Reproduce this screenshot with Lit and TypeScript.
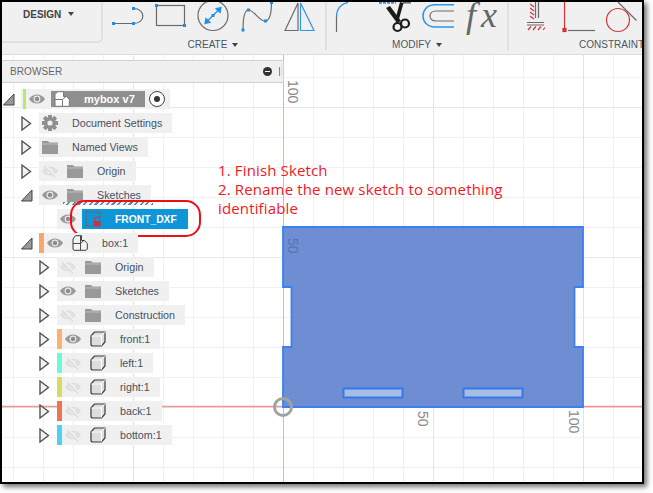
import { LitElement, html, svg, css, nothing } from 'lit';
import { customElement } from 'lit/decorators.js';

type Row = {
  depth: number;
  arrow?: 'right' | 'down';
  label: string;
  icon: 'gear' | 'folder' | 'body' | 'cube' | 'sketch' | 'doc';
  eye?: 'on' | 'off';
  bar?: string;
  kind?: 'root' | 'active';
};

const rows: Row[] = [
  { depth: 0, arrow: 'down', label: 'mybox v7', icon: 'doc', eye: 'on', bar: '#b8e96e', kind: 'root' },
  { depth: 1, arrow: 'right', label: 'Document Settings', icon: 'gear' },
  { depth: 1, arrow: 'right', label: 'Named Views', icon: 'folder' },
  { depth: 1, arrow: 'right', label: 'Origin', icon: 'folder', eye: 'off' },
  { depth: 1, arrow: 'down', label: 'Sketches', icon: 'folder', eye: 'on' },
  { depth: 2, label: 'FRONT_DXF', icon: 'sketch', eye: 'on', kind: 'active' },
  { depth: 1, arrow: 'down', label: 'box:1', icon: 'body', eye: 'on', bar: '#f9a56b' },
  { depth: 2, arrow: 'right', label: 'Origin', icon: 'folder', eye: 'off' },
  { depth: 2, arrow: 'right', label: 'Sketches', icon: 'folder', eye: 'on' },
  { depth: 2, arrow: 'right', label: 'Construction', icon: 'folder', eye: 'off' },
  { depth: 2, arrow: 'right', label: 'front:1', icon: 'cube', eye: 'on', bar: '#fdb36f' },
  { depth: 2, arrow: 'right', label: 'left:1', icon: 'cube', eye: 'off', bar: '#6cfad6' },
  { depth: 2, arrow: 'right', label: 'right:1', icon: 'cube', eye: 'off', bar: '#d8dc58' },
  { depth: 2, arrow: 'right', label: 'back:1', icon: 'cube', eye: 'off', bar: '#ec7550' },
  { depth: 2, arrow: 'right', label: 'bottom:1', icon: 'cube', eye: 'off', bar: '#4ed0f2' },
];

const BLUE = '#1e8fe6';
const GRAY = '#6a6a6a';
const RED = '#d2343a';

const dot = (x: number, y: number) => svg`<rect x=${x - 1.5} y=${y - 1.5} width="3" height="3" fill=${BLUE} stroke="none"></rect>`;

const arrowIcon = (dir?: string) => {
  if (!dir) return nothing;
  return dir === 'right'
    ? html`<svg class="arrow" width="11" height="15" viewBox="0 0 11 15"><path d="M1 1 L9.5 7.5 L1 14 Z" fill="#f2f2f2" stroke="#555" stroke-width="1.4"></path></svg>`
    : html`<svg class="arrow" width="12" height="15" viewBox="0 0 12 15"><path d="M0.5 13 L11 13 L11 2 Z" fill="#999" stroke="#444" stroke-width="1"></path></svg>`;
};

const eyeIcon = (state?: string) => {
  if (!state) return nothing;
  if (state === 'on') {
    return html`<svg class="eye" width="16" height="12" viewBox="0 0 16 12">
      <path d="M0 6 C3.5 0 12.5 0 16 6 C12.5 12 3.5 12 0 6 Z" fill="#999"></path>
      <circle cx="8" cy="6" r="3.4" fill="#e8e8e8"></circle>
      <circle cx="8" cy="6" r="2.2" fill="#8c8c8c"></circle>
    </svg>`;
  }
  return html`<svg class="eye" width="16" height="14" viewBox="0 0 16 14">
    <path d="M0 7 C3.5 1 12.5 1 16 7 C12.5 13 3.5 13 0 7 Z" fill="#e0e0e0"></path>
    <circle cx="8" cy="7" r="2.6" fill="#f0f0f0"></circle>
    <path d="M2.5 1 L14 13" stroke="#f0f0f0" stroke-width="2.4"></path>
    <path d="M2 2 L13 13.5" stroke="#dcdcdc" stroke-width="1.2"></path>
  </svg>`;
};

const gearTeeth = [0, 45, 90, 135, 180, 225, 270, 315];

const treeIcon = (name: string) => {
  switch (name) {
    case 'gear':
      return html`<svg class="icon" width="16" height="16" viewBox="0 0 16 16">
        ${gearTeeth.map((a) => svg`<rect x="6.2" y="0" width="3.6" height="16" fill="#8e8e8e" transform="rotate(${a} 8 8)"></rect>`)}
        <circle cx="8" cy="8" r="6" fill="#8e8e8e"></circle>
        <circle cx="8" cy="8" r="2.6" fill="#f0f0f0"></circle>
      </svg>`;
    case 'folder':
      return html`<svg class="icon" width="16" height="13" viewBox="0 0 16 13">
        <path d="M0 0 H6 L7.5 1.5 H16 V13 H0 Z" fill="#999"></path>
        <path d="M0 3 H16" stroke="#c9c9c9" stroke-width="0.8"></path>
      </svg>`;
    case 'body':
      return html`<svg class="icon" width="16" height="16" viewBox="0 0 16 16" fill="#f4f4f4" stroke="#3c3c3c" stroke-width="1">
        <path d="M1 4 L3.5 0.7 H9.5 V5.5 H12.5 L15.3 8.5 V14 L14 15.3 H2 L1 14 Z"></path>
        <path d="M1 8.5 H8.5 V15 M8.5 8.5 L12 5.5 M8.5 1 V8.5" fill="none" stroke-width="0.9"></path>
      </svg>`;
    case 'doc':
      return html`<svg class="icon" width="16" height="16" viewBox="0 0 16 16" fill="#fff" stroke="#777" stroke-width="1">
        <path d="M1 3.5 L3.5 0.7 H9.5 V5.5 H12.5 L15.3 8.5 V15.3 H1 Z"></path>
        <path d="M1 8.5 H8.5 V15 M8.5 8.5 L12 5.5" fill="none"></path>
      </svg>`;
    case 'cube':
      return html`<svg class="icon" width="16" height="16" viewBox="0 0 16 16">
        <path d="M1 5 L4.5 1 H15 V11 L11.5 15 H2 L1 14 Z" fill="#dcdde2" stroke="#3c3c3c" stroke-width="1.2"></path>
        <path d="M1.5 5 H11.5 V14.5 M11.5 5 L15 1.2" fill="none" stroke="#fff" stroke-width="1"></path>
      </svg>`;
    default:
      return html`<svg class="icon" width="16" height="16" viewBox="0 0 16 16">
        <path d="M1 1 H15 V8 M1 1 V15 H7" fill="none" stroke="#9c4a3a" stroke-width="1" stroke-dasharray="2 1"></path>
        <path d="M9.5 10 V8.5 A2.5 2.5 0 0 1 14.5 8.5 V10" fill="none" stroke="#d0303a" stroke-width="1"></path>
        <rect x="8.5" y="10" width="7" height="5.5" fill="#d0303a"></rect>
      </svg>`;
  }
};

@customElement('app-root')
export class AppRoot extends LitElement {
  static styles = css`
    :host {
      display: block;
      width: 653px;
      height: 493px;
      background: #fff;
      overflow: hidden;
      font-family: 'Liberation Sans', Arial, sans-serif;
    }

    .window {
      box-sizing: border-box;
      width: 644px;
      height: 484px;
      border: 2px solid #000;
      display: flex;
      flex-direction: column;
      box-shadow: 3px 3px 5px rgba(0, 0, 0, 0.55);
    }

    /* toolbar */
    .toolbar {
      box-sizing: border-box;
      display: flex;
      align-items: flex-start;
      height: 53px;
      flex: none;
      background: #f0f0f0;
      border-bottom: 1px solid #dcdcdc;
      overflow: hidden;
    }

    .design {
      box-sizing: border-box;
      width: 101px;
      height: 41px;
      flex: none;
      display: flex;
      align-items: flex-start;
      gap: 5px;
      padding: 7px 0 0 21px;
      border-right: 2px solid #e0e0e0;
      border-bottom: 2px solid #e0e0e0;
      border-bottom-right-radius: 5px;
      font-size: 10px;
      font-weight: bold;
      color: #444;
    }

    .caret {
      display: inline-block;
      width: 0;
      height: 0;
      margin-left: 5px;
      vertical-align: 1px;
      border-left: 3px solid transparent;
      border-right: 3px solid transparent;
      border-top: 4px solid #444;
    }

    .design .caret {
      margin: 3px 0 0 2px;
    }

    .group {
      flex: none;
      box-sizing: border-box;
      height: 48px;
      border-right: 2px solid #e0e0e0;
      display: flex;
      flex-direction: column;
    }

    .group svg {
      display: block;
      flex: none;
    }

    .group.create {
      width: 224px;
    }

    .group.modify {
      width: 182px;
    }

    .group.constraint {
      width: 132px;
      border-right: none;
    }

    .label {
      font-size: 10px;
      line-height: 12px;
      padding-top: 1px;
      color: #4b5563;
      text-align: center;
      white-space: nowrap;
    }

    .create .label {
      padding-right: 2px;
    }

    .constraint .label {
      text-align: left;
      padding-left: 70px;
    }

    /* canvas */
    .canvas {
      position: relative;
      flex: 1;
      overflow: hidden;
      background-color: #fff;
      background-image:
        linear-gradient(to right, #e4e4e4 1px, transparent 1px),
        linear-gradient(to bottom, #e8e8e8 1px, transparent 1px),
        linear-gradient(to right, #f1f1f1 1px, transparent 1px),
        linear-gradient(to bottom, #f1f1f1 1px, transparent 1px);
      background-size: 150px 150px, 150px 150px, 30px 30px, 30px 30px;
      background-position: 131px 0, 0 52px, 11px 0, 0 22px;
    }

    .sketch {
      position: absolute;
      left: 0;
      top: 0;
    }

    .shape {
      filter: blur(0.35px);
    }

    .axis-text {
      font-family: 'Liberation Sans', Arial, sans-serif;
      font-size: 14px;
      fill: #8a8a8a;
    }

    .axis-text.inside {
      fill: #5a72b0;
    }

    .note {
      position: absolute;
      left: 216px;
      top: 106px;
      width: 310px;
      font-family: 'Open Sans', 'Liberation Sans', sans-serif;
      font-size: 15px;
      letter-spacing: 0.14px;
      line-height: 19px;
      color: #f2181e;
    }

    /* browser panel */
    .browser {
      position: absolute;
      left: 0;
      top: 5px;
      width: 282px;
    }

    .browser-head {
      box-sizing: border-box;
      height: 23px;
      display: flex;
      align-items: center;
      justify-content: space-between;
      padding: 0 0 0 8px;
      background: #f0f0f0;
      border: 1px solid #cfcfcf;
      border-left: none;
      font-size: 10px;
      color: #666;
      letter-spacing: 0.1px;
    }

    .head-tools {
      display: flex;
      align-items: center;
      gap: 7px;
      padding-right: 1px;
    }

    .collapse {
      width: 9px;
      height: 9px;
      border-radius: 50%;
      background: #333;
      display: flex;
      align-items: center;
      justify-content: center;
    }

    .collapse::after {
      content: '';
      width: 5px;
      height: 1px;
      background: #fff;
    }

    .grip {
      width: 1px;
      height: 9px;
      border-left: 1px solid #888;
      border-right: 1px solid #ddd;
    }

    .tree {
      padding-top: 4px;
    }

    .row {
      position: relative;
      display: flex;
      align-items: center;
      height: 24px;
    }

    .arrow {
      flex: none;
    }

    .arrow-slot {
      width: 18px;
      flex: none;
      display: flex;
      align-items: center;
    }

    .chip {
      display: flex;
      align-items: center;
      height: 20px;
      padding: 0 10px 0 3px;
      background: #f0f0f0;
      font-size: 10.7px;
      color: #47505c;
      white-space: nowrap;
    }

    .chip.barred {
      padding-left: 0;
    }

    .bar {
      width: 5px;
      height: 20px;
      margin-right: 3px;
      flex: none;
    }

    .eye {
      width: 16px;
      flex: none;
      margin-right: 9px;
    }

    .icon {
      flex: none;
    }

    .text {
      margin-left: 14px;
    }

    .root-chip {
      padding: 0 5px 0 2px;
    }

    .root-chip .bar {
      width: 3px;
    }

    .root-chip .eye {
      margin-right: 6px;
    }

    .root-name {
      display: flex;
      align-items: center;
      width: 94px;
      height: 16px;
      background: #8f8f8f;
      color: #fff;
      font-weight: bold;
      font-size: 11px;
      box-sizing: border-box;
      margin-right: 4px;
    }

    .root-name .icon {
      margin-left: 3px;
    }

    .root-name span {
      margin-left: 14px;
    }

    .radio {
      width: 16px;
      height: 16px;
      box-sizing: border-box;
      border: 1px solid #444;
      border-radius: 50%;
      background: #fff;
      display: flex;
      align-items: center;
      justify-content: center;
    }

    .radio::after {
      content: '';
      width: 6px;
      height: 6px;
      border-radius: 50%;
      background: #333;
    }

    .active-chip {
      padding-right: 0;
    }

    .active-chip .eye {
      margin-right: 6px;
    }

    .active-name {
      display: flex;
      align-items: center;
      width: 106px;
      height: 20px;
      background: #0f96d8;
      color: #fff;
      font-weight: bold;
      font-size: 10.3px;
      padding-left: 3px;
      box-sizing: border-box;
    }

    .active-name span {
      margin-left: 14px;
    }

    .squiggle {
      position: absolute;
      left: 61px;
      top: -5px;
      width: 90px;
      height: 3px;
      background-image: repeating-linear-gradient(135deg, #6c80a6 0 1.5px, transparent 1.5px 4px);
    }

    .highlight {
      position: absolute;
      left: 68px;
      top: -7px;
      width: 131px;
      height: 37px;
      box-sizing: border-box;
      border: 2px solid #ee0f16;
      border-radius: 15px;
    }
  `;

  private renderCreateIcons() {
    return html`<svg width="222" height="36" viewBox="103 2 222 36" fill="none" stroke=${GRAY} stroke-width="1.2">
      <path d="M113.5 23.5 H133.5 M133.5 8.5 C146 8.5 146 23.5 133.5 23.5"></path>
      ${dot(113.5, 23.5)} ${dot(133.5, 23.5)} ${dot(133.5, 8.5)}
      <rect x="156.5" y="5.5" width="28" height="20"></rect>
      ${dot(156.5, 5.5)} ${dot(184.5, 25.5)}
      <circle cx="213" cy="15.5" r="15"></circle>
      <path d="M205 23.5 L221 7.5 M205 23.5 l5 -1 l-4 -4 Z M221 7.5 l-5 1 l4 4 Z" stroke=${BLUE} fill=${BLUE}></path>
      ${dot(213, 15.5)}
      <path d="M243 30 C243 20 244 10 248.5 10 C254 10 259 21 265 21 C270 21 271.5 12 271.5 2"></path>
      ${dot(243, 30)} ${dot(248.5, 10)} ${dot(265.5, 21)} ${dot(271.5, 2.5)}
      <path d="M285 30.5 L298 3 V30.5 Z"></path>
      <path d="M300.5 30.5 V3 L314 30.5 Z" stroke="#2e95e6"></path>
    </svg>`;
  }

  private renderModifyIcons() {
    return html`<svg width="180" height="36" viewBox="329 2 180 36" fill="none" stroke=${GRAY} stroke-width="1.2">
      <path d="M338.5 17 C338.5 9 343 3.5 350 2.5" stroke="#2e95e6" stroke-width="1.4"></path>
      <path d="M338.5 17 V32"></path>
      <path d="M381 2.8 H398" stroke="#2e95e6" stroke-width="2" stroke-dasharray="3 1"></path>
      <path d="M405 2.8 H413" stroke-width="1.5"></path>
      <path d="M388 8 L392 6 L403 21 L399 23 Z" fill="#1b1b1b" stroke="none"></path>
      <path d="M402 2 L405.5 3 L401 19 L398 17 Z" fill="#1b1b1b" stroke="none"></path>
      <circle cx="399.5" cy="27" r="4" stroke="#1b1b1b" stroke-width="2.2"></circle>
      <circle cx="407" cy="23.5" r="4" stroke="#1b1b1b" stroke-width="2.2"></circle>
      <path d="M456 4.8 H437 C421 4.8 421 27 437 27 H456" stroke="#2e95e6" stroke-width="1.5"></path>
      <path d="M456 11 H438 C430 11 430 21 438 21 H456"></path>
      <text x="468" y="27" fill="#666" stroke="none" font-family="'Liberation Serif', serif" font-style="italic" font-size="36" letter-spacing="5">fx</text>
    </svg>`;
  }

  private renderConstraintIcons() {
    return html`<svg width="132" height="36" viewBox="510 2 132 36" fill="none" stroke=${GRAY} stroke-width="1.2">
      <path d="M536.5 2 V18 M539.5 2 V18"></path>
      <path d="M531 4 L535 7 M531 8 L535 11 M531 12 L535 15 M531 16 L535 19" stroke=${RED}></path>
      <path d="M528 22.5 H545 M528 25 H545"></path>
      <path d="M529 30 L532 26.5 M534 30 L537 26.5 M539 30 L542 26.5 M544 30 L546 27.5" stroke=${RED}></path>
      <path d="M565.5 2 V29" stroke=${RED}></path>
      <rect x="564" y="28.5" width="3" height="3" fill=${RED} stroke=${RED}></rect>
      <path d="M569 30.5 H596"></path>
      <circle cx="619" cy="20" r="11.5" stroke=${RED}></circle>
      <path d="M619 2 L637.5 20.5"></path>
    </svg>`;
  }

  private renderSketch() {
    // page coordinates shifted to the canvas origin at (2, 55)
    return html`<svg class="sketch" width="640" height="427" viewBox="2 55 640 427" fill="none">
      <path d="M283.5 55 V482" stroke="#96e283" stroke-width="1"></path>
      <path d="M2 406.5 H642" stroke="#f29595" stroke-width="1.3"></path>
      <g class="shape">
        <path
          d="M283 227 H583 V287 H574.5 V347 H583 V407 H283 V347 H291.5 V287 H283 Z"
          fill="#6e8dd3"
          stroke="#3a80f0"
          stroke-width="1.8"
        ></path>
        <rect x="343.5" y="388.5" width="59" height="9" fill="#a6bde6" stroke="#3578ea" stroke-width="2"></rect>
        <rect x="463.5" y="388.5" width="59" height="9" fill="#a6bde6" stroke="#3578ea" stroke-width="2"></rect>
      </g>
      <circle cx="283" cy="407" r="8.5" stroke="#a2a2a2" stroke-width="3"></circle>
      <text class="axis-text" transform="translate(288 80) rotate(90)">100</text>
      <text class="axis-text inside" transform="translate(288 238) rotate(90)">50</text>
      <text class="axis-text" transform="translate(418 411) rotate(90)">50</text>
      <text class="axis-text" transform="translate(569 410) rotate(90)">100</text>
    </svg>`;
  }

  private renderRow(row: Row) {
    const pad = 1 + row.depth * 18;
    const arrow = html`<div class="arrow-slot">${arrowIcon(row.arrow)}</div>`;
    let chip;
    if (row.kind === 'root') {
      chip = html`<div class="chip root-chip">
        <div class="bar" style="background:${row.bar}"></div>
        ${eyeIcon(row.eye)}
        <div class="root-name">${treeIcon(row.icon)}<span>${row.label}</span></div>
        <div class="radio"></div>
      </div>`;
    } else if (row.kind === 'active') {
      chip = html`<div class="chip active-chip">
        ${eyeIcon(row.eye)}
        <div class="active-name">${treeIcon(row.icon)}<span>${row.label}</span></div>
      </div>`;
    } else {
      chip = html`<div class="chip ${row.bar ? 'barred' : ''}">
        ${row.bar ? html`<div class="bar" style="background:${row.bar}"></div>` : nothing}
        ${eyeIcon(row.eye)} ${treeIcon(row.icon)}
        <span class="text">${row.label}</span>
      </div>`;
    }
    return html`<div class="row" style="padding-left:${pad}px">
      ${arrow}${chip}
      ${row.kind === 'active' ? html`<div class="squiggle"></div><div class="highlight"></div>` : nothing}
    </div>`;
  }

  render() {
    return html`
      <div class="window">
        <div class="toolbar">
          <div class="design">DESIGN<span class="caret"></span></div>
          <div class="group create">
            ${this.renderCreateIcons()}
            <div class="label">CREATE<span class="caret"></span></div>
          </div>
          <div class="group modify">
            ${this.renderModifyIcons()}
            <div class="label">MODIFY<span class="caret"></span></div>
          </div>
          <div class="group constraint">
            ${this.renderConstraintIcons()}
            <div class="label">CONSTRAINTS<span class="caret"></span></div>
          </div>
        </div>
        <div class="canvas">
          ${this.renderSketch()}
          <div class="browser">
            <div class="browser-head">
              <span>BROWSER</span>
              <div class="head-tools"><div class="collapse"></div><div class="grip"></div></div>
            </div>
            <div class="tree">${rows.map((r) => this.renderRow(r))}</div>
          </div>
          <div class="note">1. Finish Sketch<br />2. Rename the new sketch to something<br />identifiable</div>
        </div>
      </div>
    `;
  }
}
